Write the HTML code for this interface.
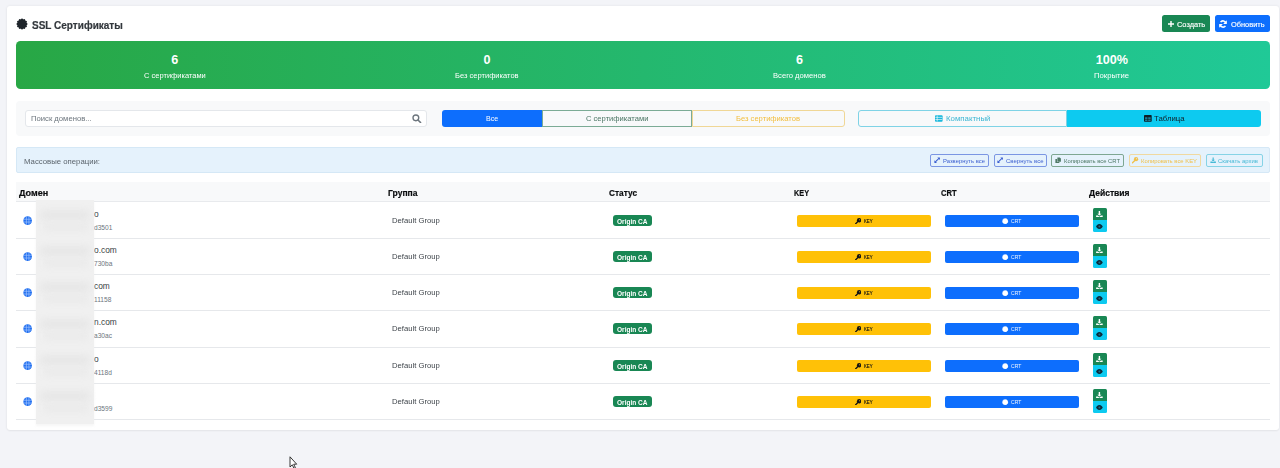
<!DOCTYPE html>
<html><head><meta charset="utf-8">
<style>
*{box-sizing:border-box;margin:0;padding:0}
html,body{width:1280px;height:468px;overflow:hidden}
body{background:#f3f4f8;font-family:"Liberation Sans",sans-serif;position:relative}
.r{position:absolute}
.t{position:absolute;white-space:nowrap}
</style></head>
<body>
<div class="r" style="left:7.40px;top:6.30px;width:1271.20px;height:423.70px;background:#fff;border-radius:3px;box-shadow:0 0 3px rgba(0,0,0,.07),0 1px 2px rgba(0,0,0,.04)"></div>
<svg class="r" style="left:15.70px;top:18.10px" width="12" height="12" viewBox="0 0 24 24"><path fill="#1f252b" d="M12.00,0.82 L12.29,0.86 L12.58,0.98 L12.85,1.18 L13.11,1.42 L13.36,1.69 L13.59,1.97 L13.81,2.22 L14.03,2.44 L14.25,2.61 L14.49,2.71 L14.74,2.74 L15.02,2.71 L15.32,2.63 L15.64,2.52 L15.98,2.39 L16.33,2.28 L16.67,2.20 L17.01,2.17 L17.32,2.21 L17.59,2.32 L17.82,2.50 L18.01,2.75 L18.15,3.05 L18.25,3.39 L18.33,3.75 L18.39,4.11 L18.46,4.44 L18.54,4.74 L18.65,4.99 L18.80,5.20 L19.01,5.35 L19.26,5.46 L19.56,5.54 L19.89,5.61 L20.25,5.67 L20.61,5.75 L20.95,5.85 L21.25,5.99 L21.50,6.18 L21.68,6.41 L21.79,6.68 L21.83,6.99 L21.80,7.33 L21.72,7.67 L21.61,8.02 L21.48,8.36 L21.37,8.68 L21.29,8.98 L21.26,9.26 L21.29,9.51 L21.39,9.75 L21.56,9.97 L21.78,10.19 L22.03,10.41 L22.31,10.64 L22.58,10.89 L22.82,11.15 L23.02,11.42 L23.14,11.71 L23.18,12.00 L23.14,12.29 L23.02,12.58 L22.82,12.85 L22.58,13.11 L22.31,13.36 L22.03,13.59 L21.78,13.81 L21.56,14.03 L21.39,14.25 L21.29,14.49 L21.26,14.74 L21.29,15.02 L21.37,15.32 L21.48,15.64 L21.61,15.98 L21.72,16.33 L21.80,16.67 L21.83,17.01 L21.79,17.32 L21.68,17.59 L21.50,17.82 L21.25,18.01 L20.95,18.15 L20.61,18.25 L20.25,18.33 L19.89,18.39 L19.56,18.46 L19.26,18.54 L19.01,18.65 L18.80,18.80 L18.65,19.01 L18.54,19.26 L18.46,19.56 L18.39,19.89 L18.33,20.25 L18.25,20.61 L18.15,20.95 L18.01,21.25 L17.82,21.50 L17.59,21.68 L17.32,21.79 L17.01,21.83 L16.67,21.80 L16.33,21.72 L15.98,21.61 L15.64,21.48 L15.32,21.37 L15.02,21.29 L14.74,21.26 L14.49,21.29 L14.25,21.39 L14.03,21.56 L13.81,21.78 L13.59,22.03 L13.36,22.31 L13.11,22.58 L12.85,22.82 L12.58,23.02 L12.29,23.14 L12.00,23.18 L11.71,23.14 L11.42,23.02 L11.15,22.82 L10.89,22.58 L10.64,22.31 L10.41,22.03 L10.19,21.78 L9.97,21.56 L9.75,21.39 L9.51,21.29 L9.26,21.26 L8.98,21.29 L8.68,21.37 L8.36,21.48 L8.02,21.61 L7.67,21.72 L7.33,21.80 L6.99,21.83 L6.68,21.79 L6.41,21.68 L6.18,21.50 L5.99,21.25 L5.85,20.95 L5.75,20.61 L5.67,20.25 L5.61,19.89 L5.54,19.56 L5.46,19.26 L5.35,19.01 L5.20,18.80 L4.99,18.65 L4.74,18.54 L4.44,18.46 L4.11,18.39 L3.75,18.33 L3.39,18.25 L3.05,18.15 L2.75,18.01 L2.50,17.82 L2.32,17.59 L2.21,17.32 L2.17,17.01 L2.20,16.67 L2.28,16.33 L2.39,15.98 L2.52,15.64 L2.63,15.32 L2.71,15.02 L2.74,14.74 L2.71,14.49 L2.61,14.25 L2.44,14.03 L2.22,13.81 L1.97,13.59 L1.69,13.36 L1.42,13.11 L1.18,12.85 L0.98,12.58 L0.86,12.29 L0.82,12.00 L0.86,11.71 L0.98,11.42 L1.18,11.15 L1.42,10.89 L1.69,10.64 L1.97,10.41 L2.22,10.19 L2.44,9.97 L2.61,9.75 L2.71,9.51 L2.74,9.26 L2.71,8.98 L2.63,8.68 L2.52,8.36 L2.39,8.02 L2.28,7.67 L2.20,7.33 L2.17,6.99 L2.21,6.68 L2.32,6.41 L2.50,6.18 L2.75,5.99 L3.05,5.85 L3.39,5.75 L3.75,5.67 L4.11,5.61 L4.44,5.54 L4.74,5.46 L4.99,5.35 L5.20,5.20 L5.35,4.99 L5.46,4.74 L5.54,4.44 L5.61,4.11 L5.67,3.75 L5.75,3.39 L5.85,3.05 L5.99,2.75 L6.18,2.50 L6.41,2.32 L6.68,2.21 L6.99,2.17 L7.33,2.20 L7.67,2.28 L8.02,2.39 L8.36,2.52 L8.68,2.63 L8.98,2.71 L9.26,2.74 L9.51,2.71 L9.75,2.61 L9.97,2.44 L10.19,2.22 L10.41,1.97 L10.64,1.69 L10.89,1.42 L11.15,1.18 L11.42,0.98 L11.71,0.86Z"/></svg>
<div class="t" style="left:32.00px;top:21.00px;font-size:10.4px;line-height:10.4px;color:#33383d;font-weight:bold;transform:scaleX(0.9631);transform-origin:0 0;-webkit-text-stroke:0.2px #33383d;">SSL Сертификаты</div>
<div class="r" style="left:1162.40px;top:15.30px;width:47.40px;height:16.50px;background:#198754;border-radius:2.5px"></div>
<svg class="r" style="left:1168.00px;top:20.90px" width="6" height="6" viewBox="0 0 6 6"><path d="M2.3 0h1.4v2.3H6v1.4H3.7V6H2.3V3.7H0V2.3h2.3z" fill="#fff"/></svg>
<div class="t" style="left:1176.50px;top:21.00px;font-size:8.0px;line-height:8.0px;color:#fff;transform:scaleX(0.9276);transform-origin:0 0;-webkit-text-stroke:0.15px #fff;">Создать</div>
<div class="r" style="left:1215.10px;top:15.40px;width:54.60px;height:16.50px;background:#0d6efd;border-radius:2.5px"></div>
<svg class="r" style="left:1219.20px;top:19.80px" width="8" height="8" viewBox="0 0 16 16"><path d="M13.6 6.4A5.8 5.8 0 0 0 3.2 4.2" fill="none" stroke="#fff" stroke-width="3.2"/><path d="M15.6 0.6v7.2H8.4z" fill="#fff"/><path d="M2.4 9.6a5.8 5.8 0 0 0 10.4 2.2" fill="none" stroke="#fff" stroke-width="3.2"/><path d="M0.4 15.4V8.2h7.2z" fill="#fff"/></svg>
<div class="t" style="left:1230.90px;top:21.00px;font-size:8.0px;line-height:8.0px;color:#fff;transform:scaleX(0.9276);transform-origin:0 0;-webkit-text-stroke:0.15px #fff;">Обновить</div>
<div class="r" style="left:16.00px;top:41.20px;width:1254.00px;height:47.60px;background:linear-gradient(90deg,#28a745 0%,#20c997 100%);border-radius:4.5px"></div>
<div class="t" style="left:171.20px;top:54.00px;font-size:12.6px;line-height:12.6px;color:#fff;font-weight:bold;">6</div>
<div class="t" style="left:143.80px;top:72.00px;font-size:7.7px;line-height:7.7px;color:#fff;transform:scaleX(0.9767);transform-origin:0 0;">С сертификатами</div>
<div class="t" style="left:483.50px;top:54.00px;font-size:12.6px;line-height:12.6px;color:#fff;font-weight:bold;">0</div>
<div class="t" style="left:455.20px;top:72.00px;font-size:7.7px;line-height:7.7px;color:#fff;transform:scaleX(0.9799);transform-origin:0 0;">Без сертификатов</div>
<div class="t" style="left:795.90px;top:54.00px;font-size:12.6px;line-height:12.6px;color:#fff;font-weight:bold;">6</div>
<div class="t" style="left:773.00px;top:72.00px;font-size:7.7px;line-height:7.7px;color:#fff;transform:scaleX(0.9921);transform-origin:0 0;">Всего доменов</div>
<div class="t" style="left:1095.70px;top:54.00px;font-size:12.6px;line-height:12.6px;color:#fff;font-weight:bold;">100%</div>
<div class="t" style="left:1094.30px;top:72.00px;font-size:7.7px;line-height:7.7px;color:#fff;transform:scaleX(0.9984);transform-origin:0 0;">Покрытие</div>
<div class="r" style="left:16.00px;top:100.60px;width:1254.00px;height:35.00px;background:#f8f9fa;border-radius:4px"></div>
<div class="r" style="left:25.20px;top:109.60px;width:402.20px;height:17.40px;background:#fff;border:1px solid #e4e7eb;border-radius:3px"></div>
<div class="t" style="left:30.60px;top:115.00px;font-size:7.7px;line-height:7.7px;color:#6c757d;transform:scaleX(0.9972);transform-origin:0 0;">Поиск доменов...</div>
<svg class="r" style="left:412.40px;top:113.60px" width="9.4" height="9.4" viewBox="0 0 16 16"><circle cx="6.6" cy="6.6" r="4.9" fill="none" stroke="#6c757d" stroke-width="2.3"/><path d="M10.2 10.2l4.4 4.4" stroke="#6c757d" stroke-width="2.6" stroke-linecap="round"/></svg>
<div class="r" style="left:441.50px;top:109.60px;width:100.50px;height:17.00px;background:#0d6efd;border-radius:3px 0 0 3px"></div>
<div class="t" style="left:485.90px;top:115.00px;font-size:7.6px;line-height:7.6px;color:#fff;transform:scaleX(0.9324);transform-origin:0 0;">Все</div>
<div class="r" style="left:542.00px;top:109.60px;width:150.00px;height:17.00px;border:1px solid #7bab95;border-radius:0"></div>
<div class="t" style="left:585.60px;top:115.00px;font-size:7.6px;line-height:7.6px;color:#4b7664;transform:scaleX(0.9983);transform-origin:0 0;">С сертификатами</div>
<div class="r" style="left:692.00px;top:109.60px;width:153.00px;height:17.00px;border:1px solid #f0d796;border-radius:0 3px 3px 0"></div>
<div class="t" style="left:736.00px;top:115.00px;font-size:7.6px;line-height:7.6px;color:#f2be3d;transform:scaleX(0.9982);transform-origin:0 0;">Без сертификатов</div>
<div class="r" style="left:858.00px;top:109.60px;width:209.00px;height:17.00px;border:1px solid #7fd3e6;border-radius:3px 0 0 3px"></div>
<svg class="r" style="left:935.30px;top:115.00px" width="7.6" height="7" viewBox="0 0 16 14"><rect x="0" y="0" width="16" height="14" rx="2" fill="#17b8dc"/><path d="M0.8 4.6h14.4M0.8 9.2h14.4M4.6 0.8v12.4" stroke="#f8f9fa" stroke-width="1.4"/></svg>
<div class="t" style="left:945.50px;top:115.00px;font-size:7.7px;line-height:7.7px;color:#3bb6d3;transform:scaleX(1.0204);transform-origin:0 0;">Компактный</div>
<div class="r" style="left:1067.00px;top:109.60px;width:194.00px;height:17.00px;background:#0dcaf0;border-radius:0 3px 3px 0"></div>
<svg class="r" style="left:1144.00px;top:115.00px" width="7.7" height="6.8" viewBox="0 0 16 14"><rect x="0" y="0" width="16" height="14" rx="1.5" fill="#0e1d24"/><path d="M2.2 4.4h5v3.6h-5zM8.8 4.4h5v3.6h-5zM2.2 9.4h5v3h-5zM8.8 9.4h5v3h-5z" fill="#1a7f99"/></svg>
<div class="t" style="left:1153.50px;top:115.00px;font-size:7.7px;line-height:7.7px;color:#10222b;transform:scaleX(1.0152);transform-origin:0 0;">Таблица</div>
<div class="r" style="left:16.00px;top:147.20px;width:1254.00px;height:26.20px;background:#e5f2fc;border:1px solid #d5e8f6;border-radius:2px"></div>
<div class="t" style="left:24.00px;top:158.00px;font-size:7.8px;line-height:7.8px;color:#5b646c;transform:scaleX(0.9961);transform-origin:0 0;">Массовые операции:</div>
<div class="r" style="left:930.20px;top:154.20px;width:58.60px;height:12.50px;border:1px solid #7b96e3;border-radius:2px"></div>
<svg class="r" style="left:933.80px;top:157.30px" width="6.3" height="6.3" viewBox="0 0 16 16"><path d="M3.5 12.5L12.5 3.5" stroke="#3a5ed0" stroke-width="2.6"/><path d="M8.5 1H15v6.5z M7.5 15H1V8.5z" fill="#3a5ed0"/></svg>
<div class="t" style="left:942.80px;top:159.00px;font-size:5.9px;line-height:5.9px;color:#3a5ed0;transform:scaleX(0.9965);transform-origin:0 0;">Развернуть все</div>
<div class="r" style="left:993.80px;top:154.20px;width:52.80px;height:12.50px;border:1px solid #7b96e3;border-radius:2px"></div>
<svg class="r" style="left:997.40px;top:157.30px" width="6.3" height="6.3" viewBox="0 0 16 16"><path d="M3.5 12.5L12.5 3.5" stroke="#3a5ed0" stroke-width="2.6"/><path d="M8.5 1H15v6.5z M7.5 15H1V8.5z" fill="#3a5ed0"/></svg>
<div class="t" style="left:1005.50px;top:159.00px;font-size:5.9px;line-height:5.9px;color:#3a5ed0;transform:scaleX(1.0202);transform-origin:0 0;">Свернуть все</div>
<div class="r" style="left:1051.40px;top:154.20px;width:72.80px;height:12.50px;border:1px solid #7ea792;border-radius:2px"></div>
<svg class="r" style="left:1055.00px;top:157.30px" width="6.3" height="6.3" viewBox="0 0 16 16"><path d="M6 1h6l3 3v8H6z" fill="#4e7866"/><path d="M1 5h4v8h6v2H1z" fill="#4e7866"/></svg>
<div class="t" style="left:1063.90px;top:159.00px;font-size:5.9px;line-height:5.9px;color:#4e7866;transform:scaleX(0.9951);transform-origin:0 0;">Копировать все CRT</div>
<div class="r" style="left:1128.80px;top:154.20px;width:72.70px;height:12.50px;border:1px solid #f0d9a0;border-radius:2px"></div>
<svg class="r" style="left:1132.40px;top:157.30px" width="6.3" height="6.3" viewBox="0 0 16 16"><circle cx="10.3" cy="5.7" r="5.4" fill="#f0c04a"/><path d="M7.2 8.8L1.2 14.8" stroke="#f0c04a" stroke-width="3.4" stroke-linecap="round"/><circle cx="11.6" cy="4.4" r="1.4" fill="#e5f2fc"/></svg>
<div class="t" style="left:1141.00px;top:159.00px;font-size:5.9px;line-height:5.9px;color:#f0c04a;transform:scaleX(0.9989);transform-origin:0 0;">Копировать все KEY</div>
<div class="r" style="left:1206.20px;top:154.20px;width:56.70px;height:12.50px;border:1px solid #86d3e6;border-radius:2px"></div>
<svg class="r" style="left:1209.80px;top:157.30px" width="6.3" height="6.3" viewBox="0 0 16 16"><path d="M6.5 1h3v6h3L8 11.5 3.5 7h3z" fill="#45b9d6"/><path d="M1 11.5h5l2 2 2-2h5V15H1z" fill="#45b9d6"/></svg>
<div class="t" style="left:1218.00px;top:159.00px;font-size:5.9px;line-height:5.9px;color:#45b9d6;transform:scaleX(1.0107);transform-origin:0 0;">Скачать архив</div>
<div class="r" style="left:16.00px;top:182.00px;width:1254.00px;height:19.50px;background:#f8f9fa"></div>
<div class="r" style="left:16.00px;top:201.00px;width:1254.00px;height:1.00px;background:#e8eaed"></div>
<div class="t" style="left:18.80px;top:189.00px;font-size:9.2px;line-height:9.2px;color:#0b0d0f;font-weight:bold;transform:scaleX(0.9864);transform-origin:0 0;-webkit-text-stroke:0.2px #0b0d0f;">Домен</div>
<div class="t" style="left:388.20px;top:189.00px;font-size:9.2px;line-height:9.2px;color:#0b0d0f;font-weight:bold;transform:scaleX(0.9316);transform-origin:0 0;-webkit-text-stroke:0.2px #0b0d0f;">Группа</div>
<div class="t" style="left:609.20px;top:189.00px;font-size:9.2px;line-height:9.2px;color:#0b0d0f;font-weight:bold;transform:scaleX(0.9043);transform-origin:0 0;-webkit-text-stroke:0.2px #0b0d0f;">Статус</div>
<div class="t" style="left:793.80px;top:189.00px;font-size:9.2px;line-height:9.2px;color:#0b0d0f;font-weight:bold;transform:scaleX(0.7940);transform-origin:0 0;-webkit-text-stroke:0.2px #0b0d0f;">KEY</div>
<div class="t" style="left:941.00px;top:189.00px;font-size:9.2px;line-height:9.2px;color:#0b0d0f;font-weight:bold;transform:scaleX(0.8262);transform-origin:0 0;-webkit-text-stroke:0.2px #0b0d0f;">CRT</div>
<div class="t" style="left:1088.80px;top:189.00px;font-size:9.2px;line-height:9.2px;color:#0b0d0f;font-weight:bold;transform:scaleX(0.9295);transform-origin:0 0;-webkit-text-stroke:0.2px #0b0d0f;">Действия</div>
<div class="r" style="left:16.00px;top:237.53px;width:1254.00px;height:1.00px;background:#e6e8eb"></div>
<svg class="r" style="left:22.90px;top:215.70px" width="9.3" height="9.3" viewBox="0 0 16 16"><circle cx="8" cy="8" r="7.4" fill="#2170f0"/><path d="M0.6 5.6h14.8M0.6 10.4h14.8M5.8 0.8v14.4M10.2 0.8v14.4" stroke="#a9c8ff" stroke-width="1.1"/></svg>
<div class="t" style="left:94.00px;top:210.00px;font-size:8.4px;line-height:8.4px;color:#3a3f44;transform:scaleX(1.0000);transform-origin:0 0;">o</div>
<div class="t" style="left:94.00px;top:225.00px;font-size:6.6px;line-height:6.6px;color:#6c757d;">d3501</div>
<div class="t" style="left:392.20px;top:217.00px;font-size:8.1px;line-height:8.1px;color:#3f454b;transform:scaleX(0.9486);transform-origin:0 0;">Default Group</div>
<div class="r" style="left:612.80px;top:215.00px;width:39.50px;height:11.30px;background:#198754;border-radius:3px"></div>
<div class="t" style="left:617.30px;top:219.00px;font-size:6.6px;line-height:6.6px;color:#fff;font-weight:bold;transform:scaleX(0.9912);transform-origin:0 0;">Origin CA</div>
<div class="r" style="left:797.20px;top:215.00px;width:134.00px;height:12.00px;background:#ffc107;border-radius:2px"></div>
<svg class="r" style="left:854.80px;top:217.70px" width="6.4" height="6.4" viewBox="0 0 16 16"><circle cx="10.3" cy="5.7" r="5.4" fill="#141414"/><path d="M7.2 8.8L1.2 14.8" stroke="#141414" stroke-width="3.4" stroke-linecap="round"/><circle cx="11.6" cy="4.4" r="1.4" fill="#ffc107"/></svg>
<div class="t" style="left:864.20px;top:219.00px;font-size:5.8px;line-height:5.8px;color:#141414;transform:scaleX(0.7414);transform-origin:0 0;-webkit-text-stroke:0.15px #141414;">KEY</div>
<div class="r" style="left:944.80px;top:215.00px;width:134.00px;height:12.00px;background:#0d6efd;border-radius:2px"></div>
<svg class="r" style="left:1002.30px;top:217.60px" width="6.4" height="6.4" viewBox="0 0 16 16"><path fill="#fff" d="M8.00,0.44 L8.20,0.46 L8.39,0.52 L8.58,0.61 L8.76,0.73 L8.94,0.86 L9.11,1.00 L9.27,1.13 L9.44,1.24 L9.60,1.33 L9.77,1.39 L9.95,1.42 L10.13,1.43 L10.33,1.41 L10.54,1.38 L10.76,1.35 L10.97,1.32 L11.19,1.31 L11.40,1.33 L11.60,1.37 L11.78,1.45 L11.94,1.57 L12.08,1.72 L12.20,1.89 L12.30,2.09 L12.38,2.29 L12.46,2.49 L12.54,2.69 L12.62,2.87 L12.72,3.03 L12.84,3.16 L12.97,3.28 L13.13,3.38 L13.31,3.46 L13.51,3.54 L13.71,3.62 L13.91,3.70 L14.11,3.80 L14.28,3.92 L14.43,4.06 L14.55,4.22 L14.63,4.40 L14.67,4.60 L14.69,4.81 L14.68,5.03 L14.65,5.24 L14.62,5.46 L14.59,5.67 L14.57,5.87 L14.58,6.05 L14.61,6.23 L14.67,6.40 L14.76,6.56 L14.87,6.73 L15.00,6.89 L15.14,7.06 L15.27,7.24 L15.39,7.42 L15.48,7.61 L15.54,7.80 L15.56,8.00 L15.54,8.20 L15.48,8.39 L15.39,8.58 L15.27,8.76 L15.14,8.94 L15.00,9.11 L14.87,9.27 L14.76,9.44 L14.67,9.60 L14.61,9.77 L14.58,9.95 L14.57,10.13 L14.59,10.33 L14.62,10.54 L14.65,10.76 L14.68,10.97 L14.69,11.19 L14.67,11.40 L14.63,11.60 L14.55,11.78 L14.43,11.94 L14.28,12.08 L14.11,12.20 L13.91,12.30 L13.71,12.38 L13.51,12.46 L13.31,12.54 L13.13,12.62 L12.97,12.72 L12.84,12.84 L12.72,12.97 L12.62,13.13 L12.54,13.31 L12.46,13.51 L12.38,13.71 L12.30,13.91 L12.20,14.11 L12.08,14.28 L11.94,14.43 L11.78,14.55 L11.60,14.63 L11.40,14.67 L11.19,14.69 L10.97,14.68 L10.76,14.65 L10.54,14.62 L10.33,14.59 L10.13,14.57 L9.95,14.58 L9.77,14.61 L9.60,14.67 L9.44,14.76 L9.27,14.87 L9.11,15.00 L8.94,15.14 L8.76,15.27 L8.58,15.39 L8.39,15.48 L8.20,15.54 L8.00,15.56 L7.80,15.54 L7.61,15.48 L7.42,15.39 L7.24,15.27 L7.06,15.14 L6.89,15.00 L6.73,14.87 L6.56,14.76 L6.40,14.67 L6.23,14.61 L6.05,14.58 L5.87,14.57 L5.67,14.59 L5.46,14.62 L5.24,14.65 L5.03,14.68 L4.81,14.69 L4.60,14.67 L4.40,14.63 L4.22,14.55 L4.06,14.43 L3.92,14.28 L3.80,14.11 L3.70,13.91 L3.62,13.71 L3.54,13.51 L3.46,13.31 L3.38,13.13 L3.28,12.97 L3.16,12.84 L3.03,12.72 L2.87,12.62 L2.69,12.54 L2.49,12.46 L2.29,12.38 L2.09,12.30 L1.89,12.20 L1.72,12.08 L1.57,11.94 L1.45,11.78 L1.37,11.60 L1.33,11.40 L1.31,11.19 L1.32,10.97 L1.35,10.76 L1.38,10.54 L1.41,10.33 L1.43,10.13 L1.42,9.95 L1.39,9.77 L1.33,9.60 L1.24,9.44 L1.13,9.27 L1.00,9.11 L0.86,8.94 L0.73,8.76 L0.61,8.58 L0.52,8.39 L0.46,8.20 L0.44,8.00 L0.46,7.80 L0.52,7.61 L0.61,7.42 L0.73,7.24 L0.86,7.06 L1.00,6.89 L1.13,6.73 L1.24,6.56 L1.33,6.40 L1.39,6.23 L1.42,6.05 L1.43,5.87 L1.41,5.67 L1.38,5.46 L1.35,5.24 L1.32,5.03 L1.31,4.81 L1.33,4.60 L1.37,4.40 L1.45,4.22 L1.57,4.06 L1.72,3.92 L1.89,3.80 L2.09,3.70 L2.29,3.62 L2.49,3.54 L2.69,3.46 L2.87,3.38 L3.03,3.28 L3.16,3.16 L3.28,3.03 L3.38,2.87 L3.46,2.69 L3.54,2.49 L3.62,2.29 L3.70,2.09 L3.80,1.89 L3.92,1.72 L4.06,1.57 L4.22,1.45 L4.40,1.37 L4.60,1.33 L4.81,1.31 L5.03,1.32 L5.24,1.35 L5.46,1.38 L5.67,1.41 L5.87,1.43 L6.05,1.42 L6.23,1.39 L6.40,1.33 L6.56,1.24 L6.73,1.13 L6.89,1.00 L7.06,0.86 L7.24,0.73 L7.42,0.61 L7.61,0.52 L7.80,0.46Z"/></svg>
<div class="t" style="left:1010.70px;top:219.00px;font-size:5.8px;line-height:5.8px;color:#f0f5ff;transform:scaleX(0.8722);transform-origin:0 0;">CRT</div>
<div class="r" style="left:1092.50px;top:208.00px;width:14.40px;height:11.70px;background:#198754;border-radius:1.5px 1.5px 0 0"></div>
<svg class="r" style="left:1096.30px;top:210.80px" width="6.8" height="6.6" viewBox="0 0 16 16"><path d="M6.3 0h3.4v6.5h3.3L8 11 3 6.5h3.3z" fill="#fff"/><path d="M0 11h4.5L8 14l3.5-3H16v5H0z" fill="#fff"/></svg>
<div class="r" style="left:1092.50px;top:219.70px;width:14.40px;height:12.30px;background:#0dcaf0;border-radius:0 0 1.5px 1.5px"></div>
<svg class="r" style="left:1096.00px;top:223.60px" width="6.8" height="5.0" viewBox="0 0 16 12"><path d="M8 0C3.5 0 .8 3.8 0 6c.8 2.2 3.5 6 8 6s7.2-3.8 8-6C15.2 3.8 12.5 0 8 0z" fill="#0b2a3a"/><circle cx="8" cy="6" r="2.4" fill="#1b6d86"/></svg>
<div class="r" style="left:16.00px;top:273.86px;width:1254.00px;height:1.00px;background:#e6e8eb"></div>
<svg class="r" style="left:22.90px;top:251.70px" width="9.3" height="9.3" viewBox="0 0 16 16"><circle cx="8" cy="8" r="7.4" fill="#2170f0"/><path d="M0.6 5.6h14.8M0.6 10.4h14.8M5.8 0.8v14.4M10.2 0.8v14.4" stroke="#a9c8ff" stroke-width="1.1"/></svg>
<div class="t" style="left:94.00px;top:246.00px;font-size:8.4px;line-height:8.4px;color:#3a3f44;transform:scaleX(1.0000);transform-origin:0 0;">o.com</div>
<div class="t" style="left:94.00px;top:261.00px;font-size:6.6px;line-height:6.6px;color:#6c757d;">730ba</div>
<div class="t" style="left:392.20px;top:253.00px;font-size:8.1px;line-height:8.1px;color:#3f454b;transform:scaleX(0.9486);transform-origin:0 0;">Default Group</div>
<div class="r" style="left:612.80px;top:251.00px;width:39.50px;height:11.30px;background:#198754;border-radius:3px"></div>
<div class="t" style="left:617.30px;top:255.00px;font-size:6.6px;line-height:6.6px;color:#fff;font-weight:bold;transform:scaleX(0.9912);transform-origin:0 0;">Origin CA</div>
<div class="r" style="left:797.20px;top:251.00px;width:134.00px;height:12.00px;background:#ffc107;border-radius:2px"></div>
<svg class="r" style="left:854.80px;top:253.70px" width="6.4" height="6.4" viewBox="0 0 16 16"><circle cx="10.3" cy="5.7" r="5.4" fill="#141414"/><path d="M7.2 8.8L1.2 14.8" stroke="#141414" stroke-width="3.4" stroke-linecap="round"/><circle cx="11.6" cy="4.4" r="1.4" fill="#ffc107"/></svg>
<div class="t" style="left:864.20px;top:255.00px;font-size:5.8px;line-height:5.8px;color:#141414;transform:scaleX(0.7414);transform-origin:0 0;-webkit-text-stroke:0.15px #141414;">KEY</div>
<div class="r" style="left:944.80px;top:251.00px;width:134.00px;height:12.00px;background:#0d6efd;border-radius:2px"></div>
<svg class="r" style="left:1002.30px;top:253.60px" width="6.4" height="6.4" viewBox="0 0 16 16"><path fill="#fff" d="M8.00,0.44 L8.20,0.46 L8.39,0.52 L8.58,0.61 L8.76,0.73 L8.94,0.86 L9.11,1.00 L9.27,1.13 L9.44,1.24 L9.60,1.33 L9.77,1.39 L9.95,1.42 L10.13,1.43 L10.33,1.41 L10.54,1.38 L10.76,1.35 L10.97,1.32 L11.19,1.31 L11.40,1.33 L11.60,1.37 L11.78,1.45 L11.94,1.57 L12.08,1.72 L12.20,1.89 L12.30,2.09 L12.38,2.29 L12.46,2.49 L12.54,2.69 L12.62,2.87 L12.72,3.03 L12.84,3.16 L12.97,3.28 L13.13,3.38 L13.31,3.46 L13.51,3.54 L13.71,3.62 L13.91,3.70 L14.11,3.80 L14.28,3.92 L14.43,4.06 L14.55,4.22 L14.63,4.40 L14.67,4.60 L14.69,4.81 L14.68,5.03 L14.65,5.24 L14.62,5.46 L14.59,5.67 L14.57,5.87 L14.58,6.05 L14.61,6.23 L14.67,6.40 L14.76,6.56 L14.87,6.73 L15.00,6.89 L15.14,7.06 L15.27,7.24 L15.39,7.42 L15.48,7.61 L15.54,7.80 L15.56,8.00 L15.54,8.20 L15.48,8.39 L15.39,8.58 L15.27,8.76 L15.14,8.94 L15.00,9.11 L14.87,9.27 L14.76,9.44 L14.67,9.60 L14.61,9.77 L14.58,9.95 L14.57,10.13 L14.59,10.33 L14.62,10.54 L14.65,10.76 L14.68,10.97 L14.69,11.19 L14.67,11.40 L14.63,11.60 L14.55,11.78 L14.43,11.94 L14.28,12.08 L14.11,12.20 L13.91,12.30 L13.71,12.38 L13.51,12.46 L13.31,12.54 L13.13,12.62 L12.97,12.72 L12.84,12.84 L12.72,12.97 L12.62,13.13 L12.54,13.31 L12.46,13.51 L12.38,13.71 L12.30,13.91 L12.20,14.11 L12.08,14.28 L11.94,14.43 L11.78,14.55 L11.60,14.63 L11.40,14.67 L11.19,14.69 L10.97,14.68 L10.76,14.65 L10.54,14.62 L10.33,14.59 L10.13,14.57 L9.95,14.58 L9.77,14.61 L9.60,14.67 L9.44,14.76 L9.27,14.87 L9.11,15.00 L8.94,15.14 L8.76,15.27 L8.58,15.39 L8.39,15.48 L8.20,15.54 L8.00,15.56 L7.80,15.54 L7.61,15.48 L7.42,15.39 L7.24,15.27 L7.06,15.14 L6.89,15.00 L6.73,14.87 L6.56,14.76 L6.40,14.67 L6.23,14.61 L6.05,14.58 L5.87,14.57 L5.67,14.59 L5.46,14.62 L5.24,14.65 L5.03,14.68 L4.81,14.69 L4.60,14.67 L4.40,14.63 L4.22,14.55 L4.06,14.43 L3.92,14.28 L3.80,14.11 L3.70,13.91 L3.62,13.71 L3.54,13.51 L3.46,13.31 L3.38,13.13 L3.28,12.97 L3.16,12.84 L3.03,12.72 L2.87,12.62 L2.69,12.54 L2.49,12.46 L2.29,12.38 L2.09,12.30 L1.89,12.20 L1.72,12.08 L1.57,11.94 L1.45,11.78 L1.37,11.60 L1.33,11.40 L1.31,11.19 L1.32,10.97 L1.35,10.76 L1.38,10.54 L1.41,10.33 L1.43,10.13 L1.42,9.95 L1.39,9.77 L1.33,9.60 L1.24,9.44 L1.13,9.27 L1.00,9.11 L0.86,8.94 L0.73,8.76 L0.61,8.58 L0.52,8.39 L0.46,8.20 L0.44,8.00 L0.46,7.80 L0.52,7.61 L0.61,7.42 L0.73,7.24 L0.86,7.06 L1.00,6.89 L1.13,6.73 L1.24,6.56 L1.33,6.40 L1.39,6.23 L1.42,6.05 L1.43,5.87 L1.41,5.67 L1.38,5.46 L1.35,5.24 L1.32,5.03 L1.31,4.81 L1.33,4.60 L1.37,4.40 L1.45,4.22 L1.57,4.06 L1.72,3.92 L1.89,3.80 L2.09,3.70 L2.29,3.62 L2.49,3.54 L2.69,3.46 L2.87,3.38 L3.03,3.28 L3.16,3.16 L3.28,3.03 L3.38,2.87 L3.46,2.69 L3.54,2.49 L3.62,2.29 L3.70,2.09 L3.80,1.89 L3.92,1.72 L4.06,1.57 L4.22,1.45 L4.40,1.37 L4.60,1.33 L4.81,1.31 L5.03,1.32 L5.24,1.35 L5.46,1.38 L5.67,1.41 L5.87,1.43 L6.05,1.42 L6.23,1.39 L6.40,1.33 L6.56,1.24 L6.73,1.13 L6.89,1.00 L7.06,0.86 L7.24,0.73 L7.42,0.61 L7.61,0.52 L7.80,0.46Z"/></svg>
<div class="t" style="left:1010.70px;top:255.00px;font-size:5.8px;line-height:5.8px;color:#f0f5ff;transform:scaleX(0.8722);transform-origin:0 0;">CRT</div>
<div class="r" style="left:1092.50px;top:244.00px;width:14.40px;height:11.70px;background:#198754;border-radius:1.5px 1.5px 0 0"></div>
<svg class="r" style="left:1096.30px;top:246.80px" width="6.8" height="6.6" viewBox="0 0 16 16"><path d="M6.3 0h3.4v6.5h3.3L8 11 3 6.5h3.3z" fill="#fff"/><path d="M0 11h4.5L8 14l3.5-3H16v5H0z" fill="#fff"/></svg>
<div class="r" style="left:1092.50px;top:255.70px;width:14.40px;height:12.30px;background:#0dcaf0;border-radius:0 0 1.5px 1.5px"></div>
<svg class="r" style="left:1096.00px;top:259.60px" width="6.8" height="5.0" viewBox="0 0 16 12"><path d="M8 0C3.5 0 .8 3.8 0 6c.8 2.2 3.5 6 8 6s7.2-3.8 8-6C15.2 3.8 12.5 0 8 0z" fill="#0b2a3a"/><circle cx="8" cy="6" r="2.4" fill="#1b6d86"/></svg>
<div class="r" style="left:16.00px;top:310.19px;width:1254.00px;height:1.00px;background:#e6e8eb"></div>
<svg class="r" style="left:22.90px;top:287.70px" width="9.3" height="9.3" viewBox="0 0 16 16"><circle cx="8" cy="8" r="7.4" fill="#2170f0"/><path d="M0.6 5.6h14.8M0.6 10.4h14.8M5.8 0.8v14.4M10.2 0.8v14.4" stroke="#a9c8ff" stroke-width="1.1"/></svg>
<div class="t" style="left:94.00px;top:282.00px;font-size:8.4px;line-height:8.4px;color:#3a3f44;transform:scaleX(1.0000);transform-origin:0 0;">com</div>
<div class="t" style="left:94.00px;top:297.00px;font-size:6.6px;line-height:6.6px;color:#6c757d;">11158</div>
<div class="t" style="left:392.20px;top:289.00px;font-size:8.1px;line-height:8.1px;color:#3f454b;transform:scaleX(0.9486);transform-origin:0 0;">Default Group</div>
<div class="r" style="left:612.80px;top:287.00px;width:39.50px;height:11.30px;background:#198754;border-radius:3px"></div>
<div class="t" style="left:617.30px;top:291.00px;font-size:6.6px;line-height:6.6px;color:#fff;font-weight:bold;transform:scaleX(0.9912);transform-origin:0 0;">Origin CA</div>
<div class="r" style="left:797.20px;top:287.00px;width:134.00px;height:12.00px;background:#ffc107;border-radius:2px"></div>
<svg class="r" style="left:854.80px;top:289.70px" width="6.4" height="6.4" viewBox="0 0 16 16"><circle cx="10.3" cy="5.7" r="5.4" fill="#141414"/><path d="M7.2 8.8L1.2 14.8" stroke="#141414" stroke-width="3.4" stroke-linecap="round"/><circle cx="11.6" cy="4.4" r="1.4" fill="#ffc107"/></svg>
<div class="t" style="left:864.20px;top:291.00px;font-size:5.8px;line-height:5.8px;color:#141414;transform:scaleX(0.7414);transform-origin:0 0;-webkit-text-stroke:0.15px #141414;">KEY</div>
<div class="r" style="left:944.80px;top:287.00px;width:134.00px;height:12.00px;background:#0d6efd;border-radius:2px"></div>
<svg class="r" style="left:1002.30px;top:289.60px" width="6.4" height="6.4" viewBox="0 0 16 16"><path fill="#fff" d="M8.00,0.44 L8.20,0.46 L8.39,0.52 L8.58,0.61 L8.76,0.73 L8.94,0.86 L9.11,1.00 L9.27,1.13 L9.44,1.24 L9.60,1.33 L9.77,1.39 L9.95,1.42 L10.13,1.43 L10.33,1.41 L10.54,1.38 L10.76,1.35 L10.97,1.32 L11.19,1.31 L11.40,1.33 L11.60,1.37 L11.78,1.45 L11.94,1.57 L12.08,1.72 L12.20,1.89 L12.30,2.09 L12.38,2.29 L12.46,2.49 L12.54,2.69 L12.62,2.87 L12.72,3.03 L12.84,3.16 L12.97,3.28 L13.13,3.38 L13.31,3.46 L13.51,3.54 L13.71,3.62 L13.91,3.70 L14.11,3.80 L14.28,3.92 L14.43,4.06 L14.55,4.22 L14.63,4.40 L14.67,4.60 L14.69,4.81 L14.68,5.03 L14.65,5.24 L14.62,5.46 L14.59,5.67 L14.57,5.87 L14.58,6.05 L14.61,6.23 L14.67,6.40 L14.76,6.56 L14.87,6.73 L15.00,6.89 L15.14,7.06 L15.27,7.24 L15.39,7.42 L15.48,7.61 L15.54,7.80 L15.56,8.00 L15.54,8.20 L15.48,8.39 L15.39,8.58 L15.27,8.76 L15.14,8.94 L15.00,9.11 L14.87,9.27 L14.76,9.44 L14.67,9.60 L14.61,9.77 L14.58,9.95 L14.57,10.13 L14.59,10.33 L14.62,10.54 L14.65,10.76 L14.68,10.97 L14.69,11.19 L14.67,11.40 L14.63,11.60 L14.55,11.78 L14.43,11.94 L14.28,12.08 L14.11,12.20 L13.91,12.30 L13.71,12.38 L13.51,12.46 L13.31,12.54 L13.13,12.62 L12.97,12.72 L12.84,12.84 L12.72,12.97 L12.62,13.13 L12.54,13.31 L12.46,13.51 L12.38,13.71 L12.30,13.91 L12.20,14.11 L12.08,14.28 L11.94,14.43 L11.78,14.55 L11.60,14.63 L11.40,14.67 L11.19,14.69 L10.97,14.68 L10.76,14.65 L10.54,14.62 L10.33,14.59 L10.13,14.57 L9.95,14.58 L9.77,14.61 L9.60,14.67 L9.44,14.76 L9.27,14.87 L9.11,15.00 L8.94,15.14 L8.76,15.27 L8.58,15.39 L8.39,15.48 L8.20,15.54 L8.00,15.56 L7.80,15.54 L7.61,15.48 L7.42,15.39 L7.24,15.27 L7.06,15.14 L6.89,15.00 L6.73,14.87 L6.56,14.76 L6.40,14.67 L6.23,14.61 L6.05,14.58 L5.87,14.57 L5.67,14.59 L5.46,14.62 L5.24,14.65 L5.03,14.68 L4.81,14.69 L4.60,14.67 L4.40,14.63 L4.22,14.55 L4.06,14.43 L3.92,14.28 L3.80,14.11 L3.70,13.91 L3.62,13.71 L3.54,13.51 L3.46,13.31 L3.38,13.13 L3.28,12.97 L3.16,12.84 L3.03,12.72 L2.87,12.62 L2.69,12.54 L2.49,12.46 L2.29,12.38 L2.09,12.30 L1.89,12.20 L1.72,12.08 L1.57,11.94 L1.45,11.78 L1.37,11.60 L1.33,11.40 L1.31,11.19 L1.32,10.97 L1.35,10.76 L1.38,10.54 L1.41,10.33 L1.43,10.13 L1.42,9.95 L1.39,9.77 L1.33,9.60 L1.24,9.44 L1.13,9.27 L1.00,9.11 L0.86,8.94 L0.73,8.76 L0.61,8.58 L0.52,8.39 L0.46,8.20 L0.44,8.00 L0.46,7.80 L0.52,7.61 L0.61,7.42 L0.73,7.24 L0.86,7.06 L1.00,6.89 L1.13,6.73 L1.24,6.56 L1.33,6.40 L1.39,6.23 L1.42,6.05 L1.43,5.87 L1.41,5.67 L1.38,5.46 L1.35,5.24 L1.32,5.03 L1.31,4.81 L1.33,4.60 L1.37,4.40 L1.45,4.22 L1.57,4.06 L1.72,3.92 L1.89,3.80 L2.09,3.70 L2.29,3.62 L2.49,3.54 L2.69,3.46 L2.87,3.38 L3.03,3.28 L3.16,3.16 L3.28,3.03 L3.38,2.87 L3.46,2.69 L3.54,2.49 L3.62,2.29 L3.70,2.09 L3.80,1.89 L3.92,1.72 L4.06,1.57 L4.22,1.45 L4.40,1.37 L4.60,1.33 L4.81,1.31 L5.03,1.32 L5.24,1.35 L5.46,1.38 L5.67,1.41 L5.87,1.43 L6.05,1.42 L6.23,1.39 L6.40,1.33 L6.56,1.24 L6.73,1.13 L6.89,1.00 L7.06,0.86 L7.24,0.73 L7.42,0.61 L7.61,0.52 L7.80,0.46Z"/></svg>
<div class="t" style="left:1010.70px;top:291.00px;font-size:5.8px;line-height:5.8px;color:#f0f5ff;transform:scaleX(0.8722);transform-origin:0 0;">CRT</div>
<div class="r" style="left:1092.50px;top:280.00px;width:14.40px;height:11.70px;background:#198754;border-radius:1.5px 1.5px 0 0"></div>
<svg class="r" style="left:1096.30px;top:282.80px" width="6.8" height="6.6" viewBox="0 0 16 16"><path d="M6.3 0h3.4v6.5h3.3L8 11 3 6.5h3.3z" fill="#fff"/><path d="M0 11h4.5L8 14l3.5-3H16v5H0z" fill="#fff"/></svg>
<div class="r" style="left:1092.50px;top:291.70px;width:14.40px;height:12.30px;background:#0dcaf0;border-radius:0 0 1.5px 1.5px"></div>
<svg class="r" style="left:1096.00px;top:295.60px" width="6.8" height="5.0" viewBox="0 0 16 12"><path d="M8 0C3.5 0 .8 3.8 0 6c.8 2.2 3.5 6 8 6s7.2-3.8 8-6C15.2 3.8 12.5 0 8 0z" fill="#0b2a3a"/><circle cx="8" cy="6" r="2.4" fill="#1b6d86"/></svg>
<div class="r" style="left:16.00px;top:346.52px;width:1254.00px;height:1.00px;background:#e6e8eb"></div>
<svg class="r" style="left:22.90px;top:323.70px" width="9.3" height="9.3" viewBox="0 0 16 16"><circle cx="8" cy="8" r="7.4" fill="#2170f0"/><path d="M0.6 5.6h14.8M0.6 10.4h14.8M5.8 0.8v14.4M10.2 0.8v14.4" stroke="#a9c8ff" stroke-width="1.1"/></svg>
<div class="t" style="left:94.00px;top:318.00px;font-size:8.4px;line-height:8.4px;color:#3a3f44;transform:scaleX(1.0000);transform-origin:0 0;">n.com</div>
<div class="t" style="left:94.00px;top:333.00px;font-size:6.6px;line-height:6.6px;color:#6c757d;">a30ac</div>
<div class="t" style="left:392.20px;top:325.00px;font-size:8.1px;line-height:8.1px;color:#3f454b;transform:scaleX(0.9486);transform-origin:0 0;">Default Group</div>
<div class="r" style="left:612.80px;top:323.00px;width:39.50px;height:11.30px;background:#198754;border-radius:3px"></div>
<div class="t" style="left:617.30px;top:327.00px;font-size:6.6px;line-height:6.6px;color:#fff;font-weight:bold;transform:scaleX(0.9912);transform-origin:0 0;">Origin CA</div>
<div class="r" style="left:797.20px;top:323.00px;width:134.00px;height:12.00px;background:#ffc107;border-radius:2px"></div>
<svg class="r" style="left:854.80px;top:325.70px" width="6.4" height="6.4" viewBox="0 0 16 16"><circle cx="10.3" cy="5.7" r="5.4" fill="#141414"/><path d="M7.2 8.8L1.2 14.8" stroke="#141414" stroke-width="3.4" stroke-linecap="round"/><circle cx="11.6" cy="4.4" r="1.4" fill="#ffc107"/></svg>
<div class="t" style="left:864.20px;top:327.00px;font-size:5.8px;line-height:5.8px;color:#141414;transform:scaleX(0.7414);transform-origin:0 0;-webkit-text-stroke:0.15px #141414;">KEY</div>
<div class="r" style="left:944.80px;top:323.00px;width:134.00px;height:12.00px;background:#0d6efd;border-radius:2px"></div>
<svg class="r" style="left:1002.30px;top:325.60px" width="6.4" height="6.4" viewBox="0 0 16 16"><path fill="#fff" d="M8.00,0.44 L8.20,0.46 L8.39,0.52 L8.58,0.61 L8.76,0.73 L8.94,0.86 L9.11,1.00 L9.27,1.13 L9.44,1.24 L9.60,1.33 L9.77,1.39 L9.95,1.42 L10.13,1.43 L10.33,1.41 L10.54,1.38 L10.76,1.35 L10.97,1.32 L11.19,1.31 L11.40,1.33 L11.60,1.37 L11.78,1.45 L11.94,1.57 L12.08,1.72 L12.20,1.89 L12.30,2.09 L12.38,2.29 L12.46,2.49 L12.54,2.69 L12.62,2.87 L12.72,3.03 L12.84,3.16 L12.97,3.28 L13.13,3.38 L13.31,3.46 L13.51,3.54 L13.71,3.62 L13.91,3.70 L14.11,3.80 L14.28,3.92 L14.43,4.06 L14.55,4.22 L14.63,4.40 L14.67,4.60 L14.69,4.81 L14.68,5.03 L14.65,5.24 L14.62,5.46 L14.59,5.67 L14.57,5.87 L14.58,6.05 L14.61,6.23 L14.67,6.40 L14.76,6.56 L14.87,6.73 L15.00,6.89 L15.14,7.06 L15.27,7.24 L15.39,7.42 L15.48,7.61 L15.54,7.80 L15.56,8.00 L15.54,8.20 L15.48,8.39 L15.39,8.58 L15.27,8.76 L15.14,8.94 L15.00,9.11 L14.87,9.27 L14.76,9.44 L14.67,9.60 L14.61,9.77 L14.58,9.95 L14.57,10.13 L14.59,10.33 L14.62,10.54 L14.65,10.76 L14.68,10.97 L14.69,11.19 L14.67,11.40 L14.63,11.60 L14.55,11.78 L14.43,11.94 L14.28,12.08 L14.11,12.20 L13.91,12.30 L13.71,12.38 L13.51,12.46 L13.31,12.54 L13.13,12.62 L12.97,12.72 L12.84,12.84 L12.72,12.97 L12.62,13.13 L12.54,13.31 L12.46,13.51 L12.38,13.71 L12.30,13.91 L12.20,14.11 L12.08,14.28 L11.94,14.43 L11.78,14.55 L11.60,14.63 L11.40,14.67 L11.19,14.69 L10.97,14.68 L10.76,14.65 L10.54,14.62 L10.33,14.59 L10.13,14.57 L9.95,14.58 L9.77,14.61 L9.60,14.67 L9.44,14.76 L9.27,14.87 L9.11,15.00 L8.94,15.14 L8.76,15.27 L8.58,15.39 L8.39,15.48 L8.20,15.54 L8.00,15.56 L7.80,15.54 L7.61,15.48 L7.42,15.39 L7.24,15.27 L7.06,15.14 L6.89,15.00 L6.73,14.87 L6.56,14.76 L6.40,14.67 L6.23,14.61 L6.05,14.58 L5.87,14.57 L5.67,14.59 L5.46,14.62 L5.24,14.65 L5.03,14.68 L4.81,14.69 L4.60,14.67 L4.40,14.63 L4.22,14.55 L4.06,14.43 L3.92,14.28 L3.80,14.11 L3.70,13.91 L3.62,13.71 L3.54,13.51 L3.46,13.31 L3.38,13.13 L3.28,12.97 L3.16,12.84 L3.03,12.72 L2.87,12.62 L2.69,12.54 L2.49,12.46 L2.29,12.38 L2.09,12.30 L1.89,12.20 L1.72,12.08 L1.57,11.94 L1.45,11.78 L1.37,11.60 L1.33,11.40 L1.31,11.19 L1.32,10.97 L1.35,10.76 L1.38,10.54 L1.41,10.33 L1.43,10.13 L1.42,9.95 L1.39,9.77 L1.33,9.60 L1.24,9.44 L1.13,9.27 L1.00,9.11 L0.86,8.94 L0.73,8.76 L0.61,8.58 L0.52,8.39 L0.46,8.20 L0.44,8.00 L0.46,7.80 L0.52,7.61 L0.61,7.42 L0.73,7.24 L0.86,7.06 L1.00,6.89 L1.13,6.73 L1.24,6.56 L1.33,6.40 L1.39,6.23 L1.42,6.05 L1.43,5.87 L1.41,5.67 L1.38,5.46 L1.35,5.24 L1.32,5.03 L1.31,4.81 L1.33,4.60 L1.37,4.40 L1.45,4.22 L1.57,4.06 L1.72,3.92 L1.89,3.80 L2.09,3.70 L2.29,3.62 L2.49,3.54 L2.69,3.46 L2.87,3.38 L3.03,3.28 L3.16,3.16 L3.28,3.03 L3.38,2.87 L3.46,2.69 L3.54,2.49 L3.62,2.29 L3.70,2.09 L3.80,1.89 L3.92,1.72 L4.06,1.57 L4.22,1.45 L4.40,1.37 L4.60,1.33 L4.81,1.31 L5.03,1.32 L5.24,1.35 L5.46,1.38 L5.67,1.41 L5.87,1.43 L6.05,1.42 L6.23,1.39 L6.40,1.33 L6.56,1.24 L6.73,1.13 L6.89,1.00 L7.06,0.86 L7.24,0.73 L7.42,0.61 L7.61,0.52 L7.80,0.46Z"/></svg>
<div class="t" style="left:1010.70px;top:327.00px;font-size:5.8px;line-height:5.8px;color:#f0f5ff;transform:scaleX(0.8722);transform-origin:0 0;">CRT</div>
<div class="r" style="left:1092.50px;top:316.00px;width:14.40px;height:11.70px;background:#198754;border-radius:1.5px 1.5px 0 0"></div>
<svg class="r" style="left:1096.30px;top:318.80px" width="6.8" height="6.6" viewBox="0 0 16 16"><path d="M6.3 0h3.4v6.5h3.3L8 11 3 6.5h3.3z" fill="#fff"/><path d="M0 11h4.5L8 14l3.5-3H16v5H0z" fill="#fff"/></svg>
<div class="r" style="left:1092.50px;top:327.70px;width:14.40px;height:12.30px;background:#0dcaf0;border-radius:0 0 1.5px 1.5px"></div>
<svg class="r" style="left:1096.00px;top:331.60px" width="6.8" height="5.0" viewBox="0 0 16 12"><path d="M8 0C3.5 0 .8 3.8 0 6c.8 2.2 3.5 6 8 6s7.2-3.8 8-6C15.2 3.8 12.5 0 8 0z" fill="#0b2a3a"/><circle cx="8" cy="6" r="2.4" fill="#1b6d86"/></svg>
<div class="r" style="left:16.00px;top:382.85px;width:1254.00px;height:1.00px;background:#e6e8eb"></div>
<svg class="r" style="left:22.90px;top:360.70px" width="9.3" height="9.3" viewBox="0 0 16 16"><circle cx="8" cy="8" r="7.4" fill="#2170f0"/><path d="M0.6 5.6h14.8M0.6 10.4h14.8M5.8 0.8v14.4M10.2 0.8v14.4" stroke="#a9c8ff" stroke-width="1.1"/></svg>
<div class="t" style="left:94.00px;top:355.00px;font-size:8.4px;line-height:8.4px;color:#3a3f44;transform:scaleX(1.0000);transform-origin:0 0;">o</div>
<div class="t" style="left:94.00px;top:370.00px;font-size:6.6px;line-height:6.6px;color:#6c757d;">4118d</div>
<div class="t" style="left:392.20px;top:362.00px;font-size:8.1px;line-height:8.1px;color:#3f454b;transform:scaleX(0.9486);transform-origin:0 0;">Default Group</div>
<div class="r" style="left:612.80px;top:360.00px;width:39.50px;height:11.30px;background:#198754;border-radius:3px"></div>
<div class="t" style="left:617.30px;top:364.00px;font-size:6.6px;line-height:6.6px;color:#fff;font-weight:bold;transform:scaleX(0.9912);transform-origin:0 0;">Origin CA</div>
<div class="r" style="left:797.20px;top:360.00px;width:134.00px;height:12.00px;background:#ffc107;border-radius:2px"></div>
<svg class="r" style="left:854.80px;top:362.70px" width="6.4" height="6.4" viewBox="0 0 16 16"><circle cx="10.3" cy="5.7" r="5.4" fill="#141414"/><path d="M7.2 8.8L1.2 14.8" stroke="#141414" stroke-width="3.4" stroke-linecap="round"/><circle cx="11.6" cy="4.4" r="1.4" fill="#ffc107"/></svg>
<div class="t" style="left:864.20px;top:364.00px;font-size:5.8px;line-height:5.8px;color:#141414;transform:scaleX(0.7414);transform-origin:0 0;-webkit-text-stroke:0.15px #141414;">KEY</div>
<div class="r" style="left:944.80px;top:360.00px;width:134.00px;height:12.00px;background:#0d6efd;border-radius:2px"></div>
<svg class="r" style="left:1002.30px;top:362.60px" width="6.4" height="6.4" viewBox="0 0 16 16"><path fill="#fff" d="M8.00,0.44 L8.20,0.46 L8.39,0.52 L8.58,0.61 L8.76,0.73 L8.94,0.86 L9.11,1.00 L9.27,1.13 L9.44,1.24 L9.60,1.33 L9.77,1.39 L9.95,1.42 L10.13,1.43 L10.33,1.41 L10.54,1.38 L10.76,1.35 L10.97,1.32 L11.19,1.31 L11.40,1.33 L11.60,1.37 L11.78,1.45 L11.94,1.57 L12.08,1.72 L12.20,1.89 L12.30,2.09 L12.38,2.29 L12.46,2.49 L12.54,2.69 L12.62,2.87 L12.72,3.03 L12.84,3.16 L12.97,3.28 L13.13,3.38 L13.31,3.46 L13.51,3.54 L13.71,3.62 L13.91,3.70 L14.11,3.80 L14.28,3.92 L14.43,4.06 L14.55,4.22 L14.63,4.40 L14.67,4.60 L14.69,4.81 L14.68,5.03 L14.65,5.24 L14.62,5.46 L14.59,5.67 L14.57,5.87 L14.58,6.05 L14.61,6.23 L14.67,6.40 L14.76,6.56 L14.87,6.73 L15.00,6.89 L15.14,7.06 L15.27,7.24 L15.39,7.42 L15.48,7.61 L15.54,7.80 L15.56,8.00 L15.54,8.20 L15.48,8.39 L15.39,8.58 L15.27,8.76 L15.14,8.94 L15.00,9.11 L14.87,9.27 L14.76,9.44 L14.67,9.60 L14.61,9.77 L14.58,9.95 L14.57,10.13 L14.59,10.33 L14.62,10.54 L14.65,10.76 L14.68,10.97 L14.69,11.19 L14.67,11.40 L14.63,11.60 L14.55,11.78 L14.43,11.94 L14.28,12.08 L14.11,12.20 L13.91,12.30 L13.71,12.38 L13.51,12.46 L13.31,12.54 L13.13,12.62 L12.97,12.72 L12.84,12.84 L12.72,12.97 L12.62,13.13 L12.54,13.31 L12.46,13.51 L12.38,13.71 L12.30,13.91 L12.20,14.11 L12.08,14.28 L11.94,14.43 L11.78,14.55 L11.60,14.63 L11.40,14.67 L11.19,14.69 L10.97,14.68 L10.76,14.65 L10.54,14.62 L10.33,14.59 L10.13,14.57 L9.95,14.58 L9.77,14.61 L9.60,14.67 L9.44,14.76 L9.27,14.87 L9.11,15.00 L8.94,15.14 L8.76,15.27 L8.58,15.39 L8.39,15.48 L8.20,15.54 L8.00,15.56 L7.80,15.54 L7.61,15.48 L7.42,15.39 L7.24,15.27 L7.06,15.14 L6.89,15.00 L6.73,14.87 L6.56,14.76 L6.40,14.67 L6.23,14.61 L6.05,14.58 L5.87,14.57 L5.67,14.59 L5.46,14.62 L5.24,14.65 L5.03,14.68 L4.81,14.69 L4.60,14.67 L4.40,14.63 L4.22,14.55 L4.06,14.43 L3.92,14.28 L3.80,14.11 L3.70,13.91 L3.62,13.71 L3.54,13.51 L3.46,13.31 L3.38,13.13 L3.28,12.97 L3.16,12.84 L3.03,12.72 L2.87,12.62 L2.69,12.54 L2.49,12.46 L2.29,12.38 L2.09,12.30 L1.89,12.20 L1.72,12.08 L1.57,11.94 L1.45,11.78 L1.37,11.60 L1.33,11.40 L1.31,11.19 L1.32,10.97 L1.35,10.76 L1.38,10.54 L1.41,10.33 L1.43,10.13 L1.42,9.95 L1.39,9.77 L1.33,9.60 L1.24,9.44 L1.13,9.27 L1.00,9.11 L0.86,8.94 L0.73,8.76 L0.61,8.58 L0.52,8.39 L0.46,8.20 L0.44,8.00 L0.46,7.80 L0.52,7.61 L0.61,7.42 L0.73,7.24 L0.86,7.06 L1.00,6.89 L1.13,6.73 L1.24,6.56 L1.33,6.40 L1.39,6.23 L1.42,6.05 L1.43,5.87 L1.41,5.67 L1.38,5.46 L1.35,5.24 L1.32,5.03 L1.31,4.81 L1.33,4.60 L1.37,4.40 L1.45,4.22 L1.57,4.06 L1.72,3.92 L1.89,3.80 L2.09,3.70 L2.29,3.62 L2.49,3.54 L2.69,3.46 L2.87,3.38 L3.03,3.28 L3.16,3.16 L3.28,3.03 L3.38,2.87 L3.46,2.69 L3.54,2.49 L3.62,2.29 L3.70,2.09 L3.80,1.89 L3.92,1.72 L4.06,1.57 L4.22,1.45 L4.40,1.37 L4.60,1.33 L4.81,1.31 L5.03,1.32 L5.24,1.35 L5.46,1.38 L5.67,1.41 L5.87,1.43 L6.05,1.42 L6.23,1.39 L6.40,1.33 L6.56,1.24 L6.73,1.13 L6.89,1.00 L7.06,0.86 L7.24,0.73 L7.42,0.61 L7.61,0.52 L7.80,0.46Z"/></svg>
<div class="t" style="left:1010.70px;top:364.00px;font-size:5.8px;line-height:5.8px;color:#f0f5ff;transform:scaleX(0.8722);transform-origin:0 0;">CRT</div>
<div class="r" style="left:1092.50px;top:353.00px;width:14.40px;height:11.70px;background:#198754;border-radius:1.5px 1.5px 0 0"></div>
<svg class="r" style="left:1096.30px;top:355.80px" width="6.8" height="6.6" viewBox="0 0 16 16"><path d="M6.3 0h3.4v6.5h3.3L8 11 3 6.5h3.3z" fill="#fff"/><path d="M0 11h4.5L8 14l3.5-3H16v5H0z" fill="#fff"/></svg>
<div class="r" style="left:1092.50px;top:364.70px;width:14.40px;height:12.30px;background:#0dcaf0;border-radius:0 0 1.5px 1.5px"></div>
<svg class="r" style="left:1096.00px;top:368.60px" width="6.8" height="5.0" viewBox="0 0 16 12"><path d="M8 0C3.5 0 .8 3.8 0 6c.8 2.2 3.5 6 8 6s7.2-3.8 8-6C15.2 3.8 12.5 0 8 0z" fill="#0b2a3a"/><circle cx="8" cy="6" r="2.4" fill="#1b6d86"/></svg>
<div class="r" style="left:16.00px;top:419.18px;width:1254.00px;height:1.00px;background:#e6e8eb"></div>
<svg class="r" style="left:22.90px;top:396.70px" width="9.3" height="9.3" viewBox="0 0 16 16"><circle cx="8" cy="8" r="7.4" fill="#2170f0"/><path d="M0.6 5.6h14.8M0.6 10.4h14.8M5.8 0.8v14.4M10.2 0.8v14.4" stroke="#a9c8ff" stroke-width="1.1"/></svg>
<div class="t" style="left:94.00px;top:406.00px;font-size:6.6px;line-height:6.6px;color:#6c757d;">d3599</div>
<div class="t" style="left:392.20px;top:398.00px;font-size:8.1px;line-height:8.1px;color:#3f454b;transform:scaleX(0.9486);transform-origin:0 0;">Default Group</div>
<div class="r" style="left:612.80px;top:396.00px;width:39.50px;height:11.30px;background:#198754;border-radius:3px"></div>
<div class="t" style="left:617.30px;top:400.00px;font-size:6.6px;line-height:6.6px;color:#fff;font-weight:bold;transform:scaleX(0.9912);transform-origin:0 0;">Origin CA</div>
<div class="r" style="left:797.20px;top:396.00px;width:134.00px;height:12.00px;background:#ffc107;border-radius:2px"></div>
<svg class="r" style="left:854.80px;top:398.70px" width="6.4" height="6.4" viewBox="0 0 16 16"><circle cx="10.3" cy="5.7" r="5.4" fill="#141414"/><path d="M7.2 8.8L1.2 14.8" stroke="#141414" stroke-width="3.4" stroke-linecap="round"/><circle cx="11.6" cy="4.4" r="1.4" fill="#ffc107"/></svg>
<div class="t" style="left:864.20px;top:400.00px;font-size:5.8px;line-height:5.8px;color:#141414;transform:scaleX(0.7414);transform-origin:0 0;-webkit-text-stroke:0.15px #141414;">KEY</div>
<div class="r" style="left:944.80px;top:396.00px;width:134.00px;height:12.00px;background:#0d6efd;border-radius:2px"></div>
<svg class="r" style="left:1002.30px;top:398.60px" width="6.4" height="6.4" viewBox="0 0 16 16"><path fill="#fff" d="M8.00,0.44 L8.20,0.46 L8.39,0.52 L8.58,0.61 L8.76,0.73 L8.94,0.86 L9.11,1.00 L9.27,1.13 L9.44,1.24 L9.60,1.33 L9.77,1.39 L9.95,1.42 L10.13,1.43 L10.33,1.41 L10.54,1.38 L10.76,1.35 L10.97,1.32 L11.19,1.31 L11.40,1.33 L11.60,1.37 L11.78,1.45 L11.94,1.57 L12.08,1.72 L12.20,1.89 L12.30,2.09 L12.38,2.29 L12.46,2.49 L12.54,2.69 L12.62,2.87 L12.72,3.03 L12.84,3.16 L12.97,3.28 L13.13,3.38 L13.31,3.46 L13.51,3.54 L13.71,3.62 L13.91,3.70 L14.11,3.80 L14.28,3.92 L14.43,4.06 L14.55,4.22 L14.63,4.40 L14.67,4.60 L14.69,4.81 L14.68,5.03 L14.65,5.24 L14.62,5.46 L14.59,5.67 L14.57,5.87 L14.58,6.05 L14.61,6.23 L14.67,6.40 L14.76,6.56 L14.87,6.73 L15.00,6.89 L15.14,7.06 L15.27,7.24 L15.39,7.42 L15.48,7.61 L15.54,7.80 L15.56,8.00 L15.54,8.20 L15.48,8.39 L15.39,8.58 L15.27,8.76 L15.14,8.94 L15.00,9.11 L14.87,9.27 L14.76,9.44 L14.67,9.60 L14.61,9.77 L14.58,9.95 L14.57,10.13 L14.59,10.33 L14.62,10.54 L14.65,10.76 L14.68,10.97 L14.69,11.19 L14.67,11.40 L14.63,11.60 L14.55,11.78 L14.43,11.94 L14.28,12.08 L14.11,12.20 L13.91,12.30 L13.71,12.38 L13.51,12.46 L13.31,12.54 L13.13,12.62 L12.97,12.72 L12.84,12.84 L12.72,12.97 L12.62,13.13 L12.54,13.31 L12.46,13.51 L12.38,13.71 L12.30,13.91 L12.20,14.11 L12.08,14.28 L11.94,14.43 L11.78,14.55 L11.60,14.63 L11.40,14.67 L11.19,14.69 L10.97,14.68 L10.76,14.65 L10.54,14.62 L10.33,14.59 L10.13,14.57 L9.95,14.58 L9.77,14.61 L9.60,14.67 L9.44,14.76 L9.27,14.87 L9.11,15.00 L8.94,15.14 L8.76,15.27 L8.58,15.39 L8.39,15.48 L8.20,15.54 L8.00,15.56 L7.80,15.54 L7.61,15.48 L7.42,15.39 L7.24,15.27 L7.06,15.14 L6.89,15.00 L6.73,14.87 L6.56,14.76 L6.40,14.67 L6.23,14.61 L6.05,14.58 L5.87,14.57 L5.67,14.59 L5.46,14.62 L5.24,14.65 L5.03,14.68 L4.81,14.69 L4.60,14.67 L4.40,14.63 L4.22,14.55 L4.06,14.43 L3.92,14.28 L3.80,14.11 L3.70,13.91 L3.62,13.71 L3.54,13.51 L3.46,13.31 L3.38,13.13 L3.28,12.97 L3.16,12.84 L3.03,12.72 L2.87,12.62 L2.69,12.54 L2.49,12.46 L2.29,12.38 L2.09,12.30 L1.89,12.20 L1.72,12.08 L1.57,11.94 L1.45,11.78 L1.37,11.60 L1.33,11.40 L1.31,11.19 L1.32,10.97 L1.35,10.76 L1.38,10.54 L1.41,10.33 L1.43,10.13 L1.42,9.95 L1.39,9.77 L1.33,9.60 L1.24,9.44 L1.13,9.27 L1.00,9.11 L0.86,8.94 L0.73,8.76 L0.61,8.58 L0.52,8.39 L0.46,8.20 L0.44,8.00 L0.46,7.80 L0.52,7.61 L0.61,7.42 L0.73,7.24 L0.86,7.06 L1.00,6.89 L1.13,6.73 L1.24,6.56 L1.33,6.40 L1.39,6.23 L1.42,6.05 L1.43,5.87 L1.41,5.67 L1.38,5.46 L1.35,5.24 L1.32,5.03 L1.31,4.81 L1.33,4.60 L1.37,4.40 L1.45,4.22 L1.57,4.06 L1.72,3.92 L1.89,3.80 L2.09,3.70 L2.29,3.62 L2.49,3.54 L2.69,3.46 L2.87,3.38 L3.03,3.28 L3.16,3.16 L3.28,3.03 L3.38,2.87 L3.46,2.69 L3.54,2.49 L3.62,2.29 L3.70,2.09 L3.80,1.89 L3.92,1.72 L4.06,1.57 L4.22,1.45 L4.40,1.37 L4.60,1.33 L4.81,1.31 L5.03,1.32 L5.24,1.35 L5.46,1.38 L5.67,1.41 L5.87,1.43 L6.05,1.42 L6.23,1.39 L6.40,1.33 L6.56,1.24 L6.73,1.13 L6.89,1.00 L7.06,0.86 L7.24,0.73 L7.42,0.61 L7.61,0.52 L7.80,0.46Z"/></svg>
<div class="t" style="left:1010.70px;top:400.00px;font-size:5.8px;line-height:5.8px;color:#f0f5ff;transform:scaleX(0.8722);transform-origin:0 0;">CRT</div>
<div class="r" style="left:1092.50px;top:389.00px;width:14.40px;height:11.70px;background:#198754;border-radius:1.5px 1.5px 0 0"></div>
<svg class="r" style="left:1096.30px;top:391.80px" width="6.8" height="6.6" viewBox="0 0 16 16"><path d="M6.3 0h3.4v6.5h3.3L8 11 3 6.5h3.3z" fill="#fff"/><path d="M0 11h4.5L8 14l3.5-3H16v5H0z" fill="#fff"/></svg>
<div class="r" style="left:1092.50px;top:400.70px;width:14.40px;height:12.30px;background:#0dcaf0;border-radius:0 0 1.5px 1.5px"></div>
<svg class="r" style="left:1096.00px;top:404.60px" width="6.8" height="5.0" viewBox="0 0 16 12"><path d="M8 0C3.5 0 .8 3.8 0 6c.8 2.2 3.5 6 8 6s7.2-3.8 8-6C15.2 3.8 12.5 0 8 0z" fill="#0b2a3a"/><circle cx="8" cy="6" r="2.4" fill="#1b6d86"/></svg>
<div class="r" style="left:36px;top:200px;width:58px;height:224px;background:#f0f0f0;box-shadow:0 2px 2px rgba(240,240,240,.6)"></div>
<div class="r" style="left:40px;top:209.5px;width:50px;height:10px;background:#e7e7e7;border-radius:5px;filter:blur(3px)"></div>
<div class="r" style="left:44px;top:222.5px;width:44px;height:8px;background:#eaeaea;border-radius:4px;filter:blur(3px)"></div>
<div class="r" style="left:40px;top:245.8px;width:50px;height:10px;background:#e7e7e7;border-radius:5px;filter:blur(3px)"></div>
<div class="r" style="left:44px;top:258.8px;width:44px;height:8px;background:#eaeaea;border-radius:4px;filter:blur(3px)"></div>
<div class="r" style="left:40px;top:282.2px;width:50px;height:10px;background:#e7e7e7;border-radius:5px;filter:blur(3px)"></div>
<div class="r" style="left:44px;top:295.2px;width:44px;height:8px;background:#eaeaea;border-radius:4px;filter:blur(3px)"></div>
<div class="r" style="left:40px;top:318.5px;width:50px;height:10px;background:#e7e7e7;border-radius:5px;filter:blur(3px)"></div>
<div class="r" style="left:44px;top:331.5px;width:44px;height:8px;background:#eaeaea;border-radius:4px;filter:blur(3px)"></div>
<div class="r" style="left:40px;top:354.8px;width:50px;height:10px;background:#e7e7e7;border-radius:5px;filter:blur(3px)"></div>
<div class="r" style="left:44px;top:367.8px;width:44px;height:8px;background:#eaeaea;border-radius:4px;filter:blur(3px)"></div>
<div class="r" style="left:40px;top:391.1px;width:50px;height:10px;background:#e7e7e7;border-radius:5px;filter:blur(3px)"></div>
<div class="r" style="left:44px;top:404.1px;width:44px;height:8px;background:#eaeaea;border-radius:4px;filter:blur(3px)"></div>
<svg class="r" style="left:288.60px;top:456.20px" width="10" height="13" viewBox="0 0 10 13"><path d="M1 .8v10.2l2.3-2.2 1.7 3.6 1.4-.7-1.7-3.5h3z" fill="#fff" stroke="#222" stroke-width=".9" stroke-linejoin="round"/></svg>
</body></html>
